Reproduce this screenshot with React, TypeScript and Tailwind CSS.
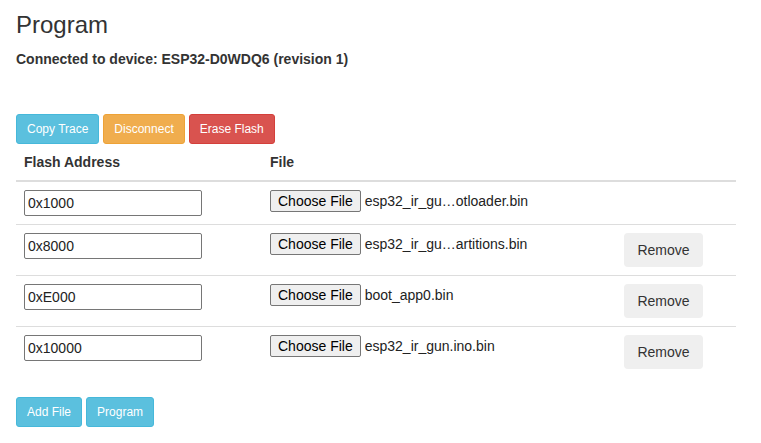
import React from "react";

const rows = [
  { addr: "0x1000", file: "esp32_ir_gu…otloader.bin", remove: false },
  { addr: "0x8000", file: "esp32_ir_gu…artitions.bin", remove: true },
  { addr: "0xE000", file: "boot_app0.bin", remove: true },
  { addr: "0x10000", file: "esp32_ir_gun.ino.bin", remove: true },
];

export default function App() {
  return (
    <div className="min-h-[443px] bg-white pl-[16px] font-['Liberation_Sans',Arial,sans-serif] text-[#333]">
      <h2 className="pt-[12px] text-[24px] leading-[26.4px] font-normal">Program</h2>
      <p className="mt-[11px] text-[14px] leading-[20px] font-bold">
        Connected to device: ESP32-D0WDQ6 (revision 1)
      </p>
      <div className="mt-[45px] flex gap-[4px]">
        <button className="h-[30px] rounded-[3px] border border-[#46b8da] bg-[#5bc0de] px-[10px] text-[12px] text-white">
          Copy Trace
        </button>
        <button className="h-[30px] rounded-[3px] border border-[#eea236] bg-[#f0ad4e] px-[10px] text-[12px] text-white">
          Disconnect
        </button>
        <button className="h-[30px] rounded-[3px] border border-[#d43f3a] bg-[#d9534f] px-[10px] text-[12px] text-white">
          Erase Flash
        </button>
      </div>
      <div className="w-[720px]">
        <div className="grid grid-cols-[246px_354px_120px] border-b-2 border-[#ddd]">
          <div className="p-[8px] text-[14px] leading-[20px] font-bold">Flash Address</div>
          <div className="p-[8px] text-[14px] leading-[20px] font-bold">File</div>
          <div className="p-[8px]"></div>
        </div>
        {rows.map((r, i) => (
          <div
            key={r.addr}
            className={
              i < rows.length - 1
                ? "grid grid-cols-[246px_354px_120px] border-b border-[#ddd]"
                : "grid grid-cols-[246px_354px_120px]"
            }
          >
            <div className="p-[8px]">
              <input
                defaultValue={r.addr}
                className="block h-[26px] w-[178px] rounded-[2px] border border-[#767676] px-[3px] text-[14px] text-[#222] outline-none"
              />
            </div>
            <div className="p-[8px]">
              <div className="flex items-center">
                <button className="h-[22px] rounded-[2px] border border-[#767676] bg-[#efefef] px-[7px] text-[14px] leading-[20px] text-black">
                  Choose File
                </button>
                <span className="ml-[4px] text-[14px] leading-[20px] text-[#222]">{r.file}</span>
              </div>
            </div>
            <div className="p-[8px]">
              {r.remove && (
                <button className="h-[34px] w-[79px] rounded-[4px] bg-[#efefef] text-[14px] text-[#333]">
                  Remove
                </button>
              )}
            </div>
          </div>
        ))}
      </div>
      <div className="mt-[20px] flex gap-[4px]">
        <button className="h-[30px] rounded-[3px] border border-[#46b8da] bg-[#5bc0de] px-[10px] text-[12px] text-white">
          Add File
        </button>
        <button className="h-[30px] rounded-[3px] border border-[#46b8da] bg-[#5bc0de] px-[10px] text-[12px] text-white">
          Program
        </button>
      </div>
    </div>
  );
}
